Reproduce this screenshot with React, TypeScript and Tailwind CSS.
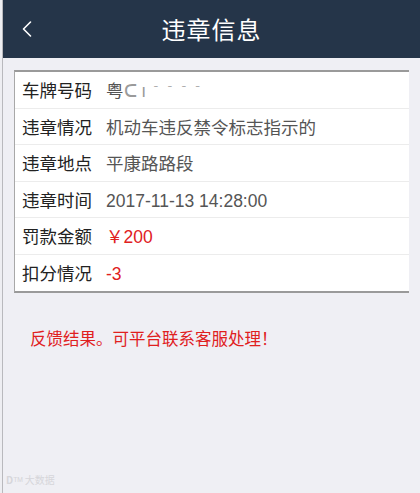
import { ChevronLeft } from 'lucide-react'

const rows = [
  { label: '车牌号码', value: '', plate: true },
  { label: '违章情况', value: '机动车违反禁令标志指示的' },
  { label: '违章地点', value: '平康路路段' },
  { label: '违章时间', value: '2017-11-13 14:28:00' },
  { label: '罚款金额', value: '￥200', red: true },
  { label: '扣分情况', value: '-3', red: true },
]

const font = { fontFamily: '"Noto Sans CJK SC", "Liberation Sans", sans-serif' }
const latin = { fontFamily: '"Liberation Sans", "Noto Sans CJK SC", sans-serif' }

export default function App() {
  return (
    <div className="flex h-[493px] w-[420px] bg-[#efeff4]" style={font}>
      {/* left edge strip */}
      <div className="h-full w-[3px] shrink-0 border-r border-[#b9b9bd] bg-[#eeeef2]" />
      <div className="flex min-w-0 flex-1 flex-col">
        <header className="relative flex h-[58px] items-center justify-center bg-[#253549]">
          <ChevronLeft className="absolute left-[10px] top-[15px] h-[28px] w-[28px] text-white" strokeWidth={1.4} />
          <h1 className="text-[24px] font-normal tracking-[1px] text-white">违章信息</h1>
        </header>

        <section className="ml-[11px] mr-[11px] mt-[12px] border-y-2 border-l border-y-[#9a9a9a] border-l-[#a8a8a8] bg-white">
          {rows.map((row, i) => (
            <div
              key={row.label}
              className={`h-[36.5px] overflow-hidden whitespace-nowrap pl-[7px] text-[17.5px] leading-[35.5px] ${
                i < rows.length - 1 ? 'border-b border-[#ececec]' : ''
              }`}
            >
              <span className="inline-block w-[84px] text-[#222]">{row.label}</span>
              {row.plate ? (
                <span className="text-[#555]">
                  粤<span className="text-[#9a9a9a]" style={latin}>ᑕ ı</span>
                  <span className="ml-[6px] align-top text-[12px] tracking-[2px] text-[#a0a0a0]">¯ ¯ ¯ ¯</span>
                </span>
              ) : (
                <span className={row.red ? 'text-[#e0201e]' : 'text-[#555]'} style={latin}>
                  {row.value}
                </span>
              )}
            </div>
          ))}
        </section>

        <p className="mt-[33px] pl-[27px] text-[16.5px] text-[#e0201e]">反馈结果。可平台联系客服处理！</p>

        <div className="mt-auto mb-[6px] pl-[3px] text-[10px] text-[#d6d6da]">
          <span className="font-bold">D</span>ᵀᴹ 大数据
        </div>
      </div>
    </div>
  )
}
